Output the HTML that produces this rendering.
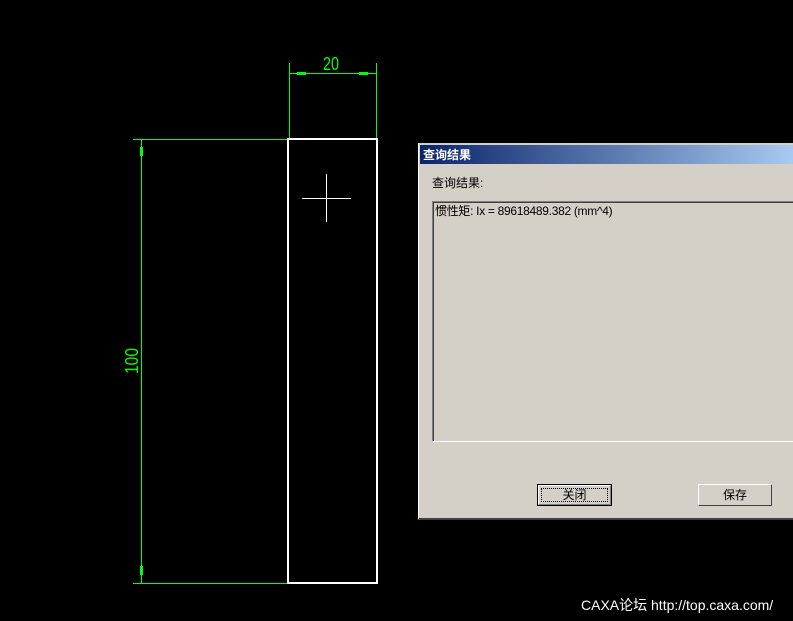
<!DOCTYPE html>
<html><head><meta charset="utf-8"><style>
html,body{margin:0;padding:0;background:#000;width:793px;height:621px;overflow:hidden;position:relative;font-family:"Liberation Sans","Noto Sans CJK SC",sans-serif}
.a{position:absolute}
.g{position:absolute;background:#00ff00}
.w{position:absolute;background:#fff}
</style></head><body>
<div class="g" style="left:289px;top:63px;width:1px;height:76px"></div>
<div class="g" style="left:376px;top:63px;width:1px;height:76px"></div>
<div class="g" style="left:289px;top:73px;width:88px;height:1px"></div>
<div class="g" style="left:133px;top:139px;width:155px;height:1px"></div>
<div class="g" style="left:133px;top:583px;width:155px;height:1px"></div>
<div class="g" style="left:141px;top:139px;width:1px;height:445px"></div>
<div class="g" style="left:297px;top:72px;width:9px;height:3px"></div>
<div class="g" style="left:359px;top:72px;width:9px;height:3px"></div>
<div class="g" style="left:140px;top:147px;width:3px;height:9px"></div>
<div class="g" style="left:140px;top:566px;width:3px;height:9px"></div>
<div class="w" style="left:288px;top:138px;width:90px;height:2px"></div>
<div class="w" style="left:288px;top:582px;width:90px;height:2px"></div>
<div class="w" style="left:287px;top:138px;width:2px;height:446px"></div>
<div class="w" style="left:376px;top:138px;width:2px;height:446px"></div>
<div class="w" style="left:302px;top:198px;width:49px;height:1px"></div>
<div class="w" style="left:326px;top:174px;width:1px;height:48px"></div>
<svg class="a" style="left:0;top:0" width="793" height="621">
<text x="331" y="70" fill="#00ff00" font-family="Liberation Sans Narrow,Liberation Sans,sans-serif" font-size="18" text-anchor="middle" textLength="16" lengthAdjust="spacingAndGlyphs">20</text>
<text transform="translate(138,361) rotate(-90)" fill="#00ff00" font-family="Liberation Sans,sans-serif" font-size="18" text-anchor="middle" textLength="26" lengthAdjust="spacingAndGlyphs">100</text>
</svg>
<div class="a" style="left:418px;top:143px;width:375px;height:377px;background:#d4d0c8;border-top:1px solid #d4d0c8;border-left:1px solid #fff;border-bottom:2px solid #404040;box-sizing:border-box"></div>
<div class="a" style="left:420px;top:145px;width:373px;height:19px;background:linear-gradient(to right,#0a246a,#a6caf0)"></div>
<div class="a" style="left:423px;top:146px;color:#fff;font-weight:bold;font-size:12px;line-height:18px">查询结果</div>
<div class="a" style="left:432px;top:175px;font-size:12px;line-height:16px;color:#000">查询结果:</div>
<div class="a" style="left:432px;top:201px;width:361px;height:241px;background:#d4d0c8;border-top:1px solid #808080;border-left:1px solid #808080;border-bottom:1px solid #fff;box-sizing:border-box">
<div style="position:absolute;left:0;top:0;right:0;bottom:0;border-top:1px solid #404040;border-left:1px solid #404040"></div>
</div>
<div class="a" style="left:435px;top:203px;font-size:12px;line-height:16px;color:#000;letter-spacing:-0.3px">惯性矩: Ix = 89618489.382 (mm^4)</div>
<div class="a" style="left:537px;top:484px;width:75px;height:22px;box-sizing:border-box;border:1px solid #000;background:#d4d0c8">
<div style="position:absolute;left:0;top:0;right:0;bottom:0;border-top:1px solid #fff;border-left:1px solid #fff;border-right:1px solid #808080;border-bottom:1px solid #808080"></div>
<div style="position:absolute;left:3px;top:3px;right:3px;bottom:3px;border:1px dotted #000"></div>
<div style="position:absolute;left:0;right:0;top:3px;text-align:center;font-size:12px;line-height:14px">关闭</div></div>
<div class="a" style="left:698px;top:484px;width:74px;height:22px;box-sizing:border-box;border-top:1px solid #fff;border-left:1px solid #fff;border-right:1px solid #404040;border-bottom:1px solid #404040;background:#d4d0c8">
<div style="position:absolute;left:0;right:0;top:3px;text-align:center;font-size:12px;line-height:14px">保存</div></div>
<div class="a" style="left:581px;top:596px;color:#fff;font-size:14px;line-height:18px;white-space:nowrap">CAXA论坛 http://top.caxa.com/</div>
</body></html>
